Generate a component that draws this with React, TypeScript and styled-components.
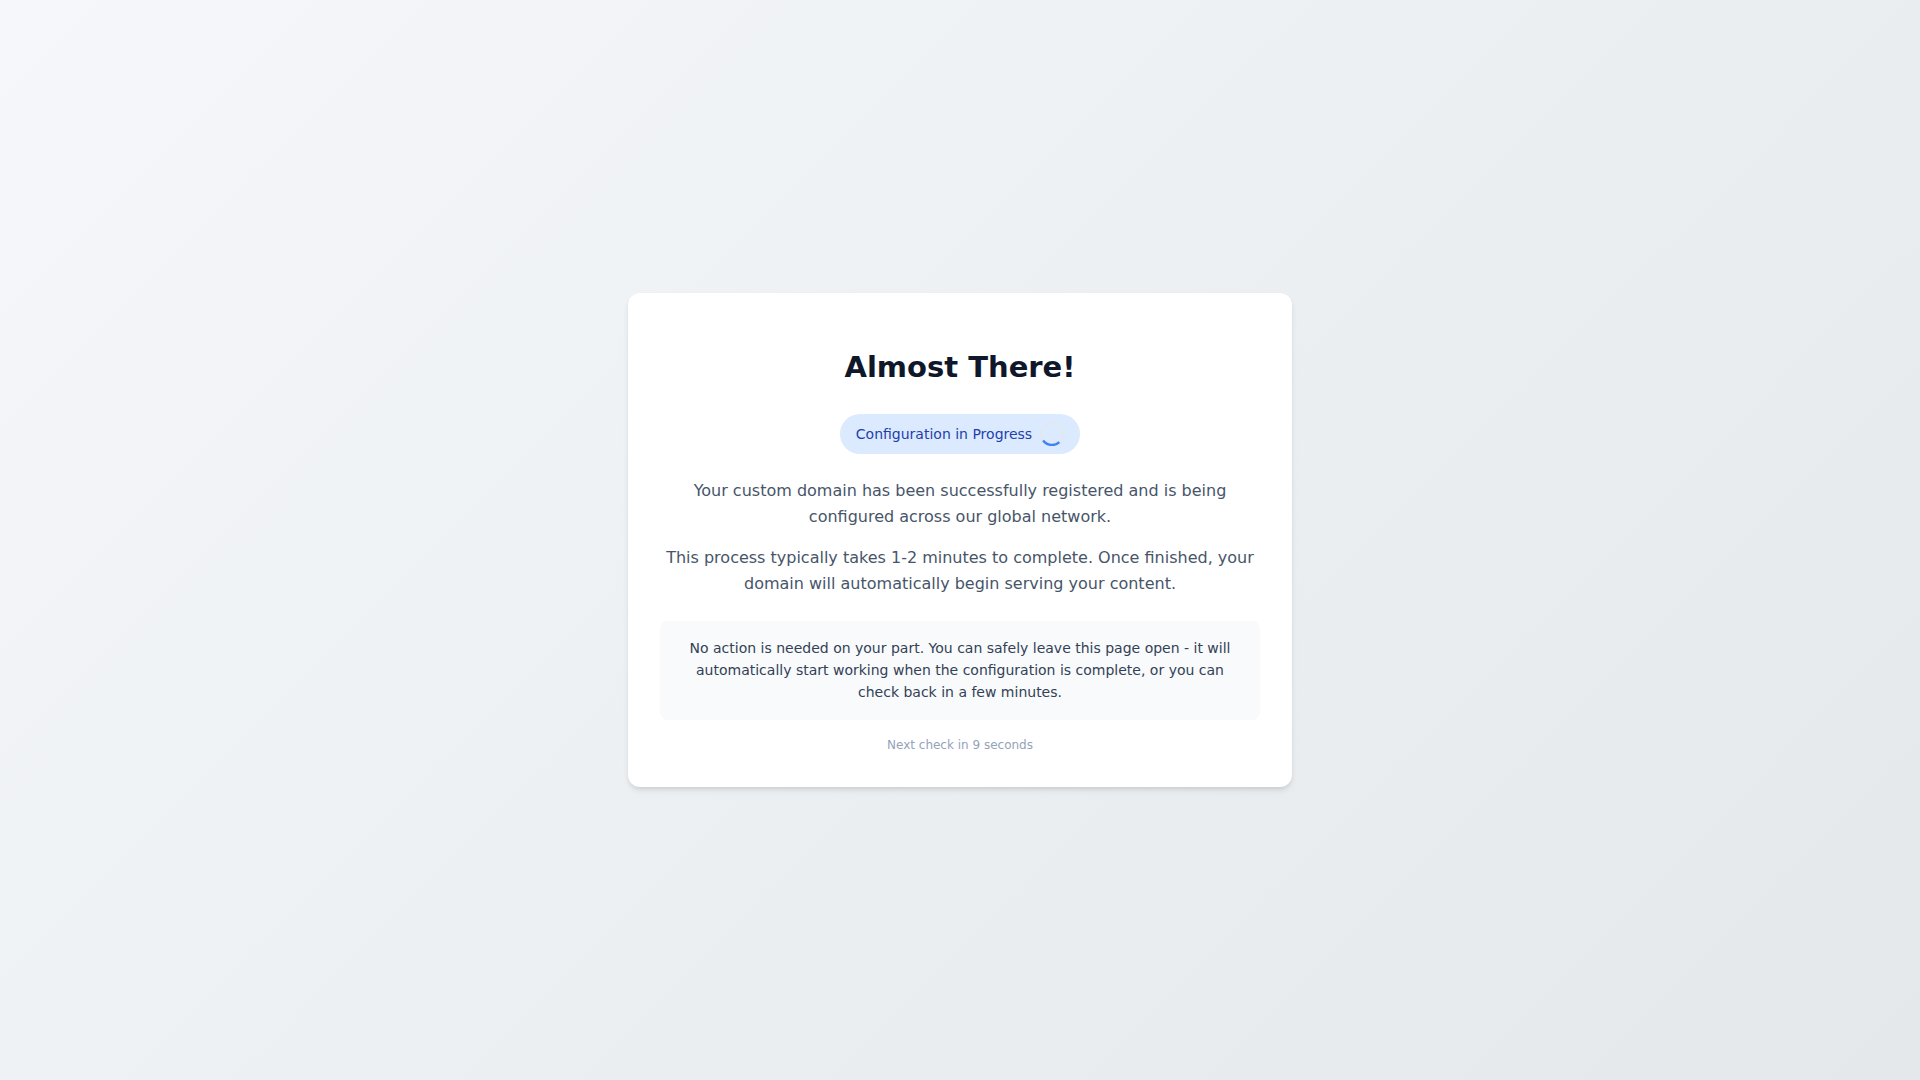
import React from "react";
import styled, { createGlobalStyle } from "styled-components";

const GlobalStyle = createGlobalStyle`
  *, *::before, *::after { box-sizing: border-box; }
  body {
    margin: 0;
    font-family: "DejaVu Sans", sans-serif;
    line-height: 1.6;
  }
`;

const Page = styled.main`
  min-height: 100vh;
  display: flex;
  align-items: center;
  justify-content: center;
  padding: 16px;
  background: linear-gradient(135deg, #f5f7fa 0%, #e4e8eb 100%);
`;

const Card = styled.section`
  width: 100%;
  max-width: 664px;
  padding: 32px;
  border-radius: 12px;
  background: #ffffff;
  text-align: center;
  box-shadow: 0 4px 6px -1px rgba(0, 0, 0, 0.1), 0 2px 4px -1px rgba(0, 0, 0, 0.06);
`;

const Title = styled.h1`
  margin: 19px 0 24px;
  font-size: 29px;
  line-height: 46px;
  font-weight: 700;
  color: #0f172a;
`;

const Status = styled.div`
  display: inline-flex;
  align-items: center;
  gap: 8px;
  margin-bottom: 24px;
  padding: 8px 16px;
  border-radius: 20px;
  background: #dbeafe;
  color: #1e40af;
  font-size: 14px;
  vertical-align: top;
`;

const Spinner = styled.svg`
  width: 24px;
  height: 24px;
`;

const Paragraph = styled.p`
  margin: 0 0 16px;
  font-size: 16px;
  color: #475569;
`;

const Note = styled.aside`
  margin-top: 24px;
  padding: 16px;
  border-radius: 8px;
  background: #f8fafc;
  color: #334155;
  font-size: 14px;
`;

const Countdown = styled.p`
  margin: 16px 0 0;
  font-size: 12px;
  color: #94a3b8;
`;

export default function App() {
  return (
    <>
      <GlobalStyle />
      <Page>
        <Card>
          <Title>Almost There!</Title>
          <Status role="status">
            Configuration in Progress
            <Spinner viewBox="0 0 24 24" fill="none" strokeWidth="2" aria-hidden="true">
              <circle cx="12" cy="12" r="11" stroke="#e2e8f0" />
              <path d="M19.36 20.17A11 11 0 0 1 3.1 18.47" stroke="#3b82f6" strokeWidth="2.3" />
            </Spinner>
          </Status>
          <Paragraph>
            Your custom domain has been successfully registered and is being configured across our global network.
          </Paragraph>
          <Paragraph>
            This process typically takes 1-2 minutes to complete. Once finished, your domain will automatically begin
            serving your content.
          </Paragraph>
          <Note>
            No action is needed on your part. You can safely leave this page open - it will automatically start working
            when the configuration is complete, or you can check back in a few minutes.
          </Note>
          <Countdown>Next check in 9 seconds</Countdown>
        </Card>
      </Page>
    </>
  );
}
